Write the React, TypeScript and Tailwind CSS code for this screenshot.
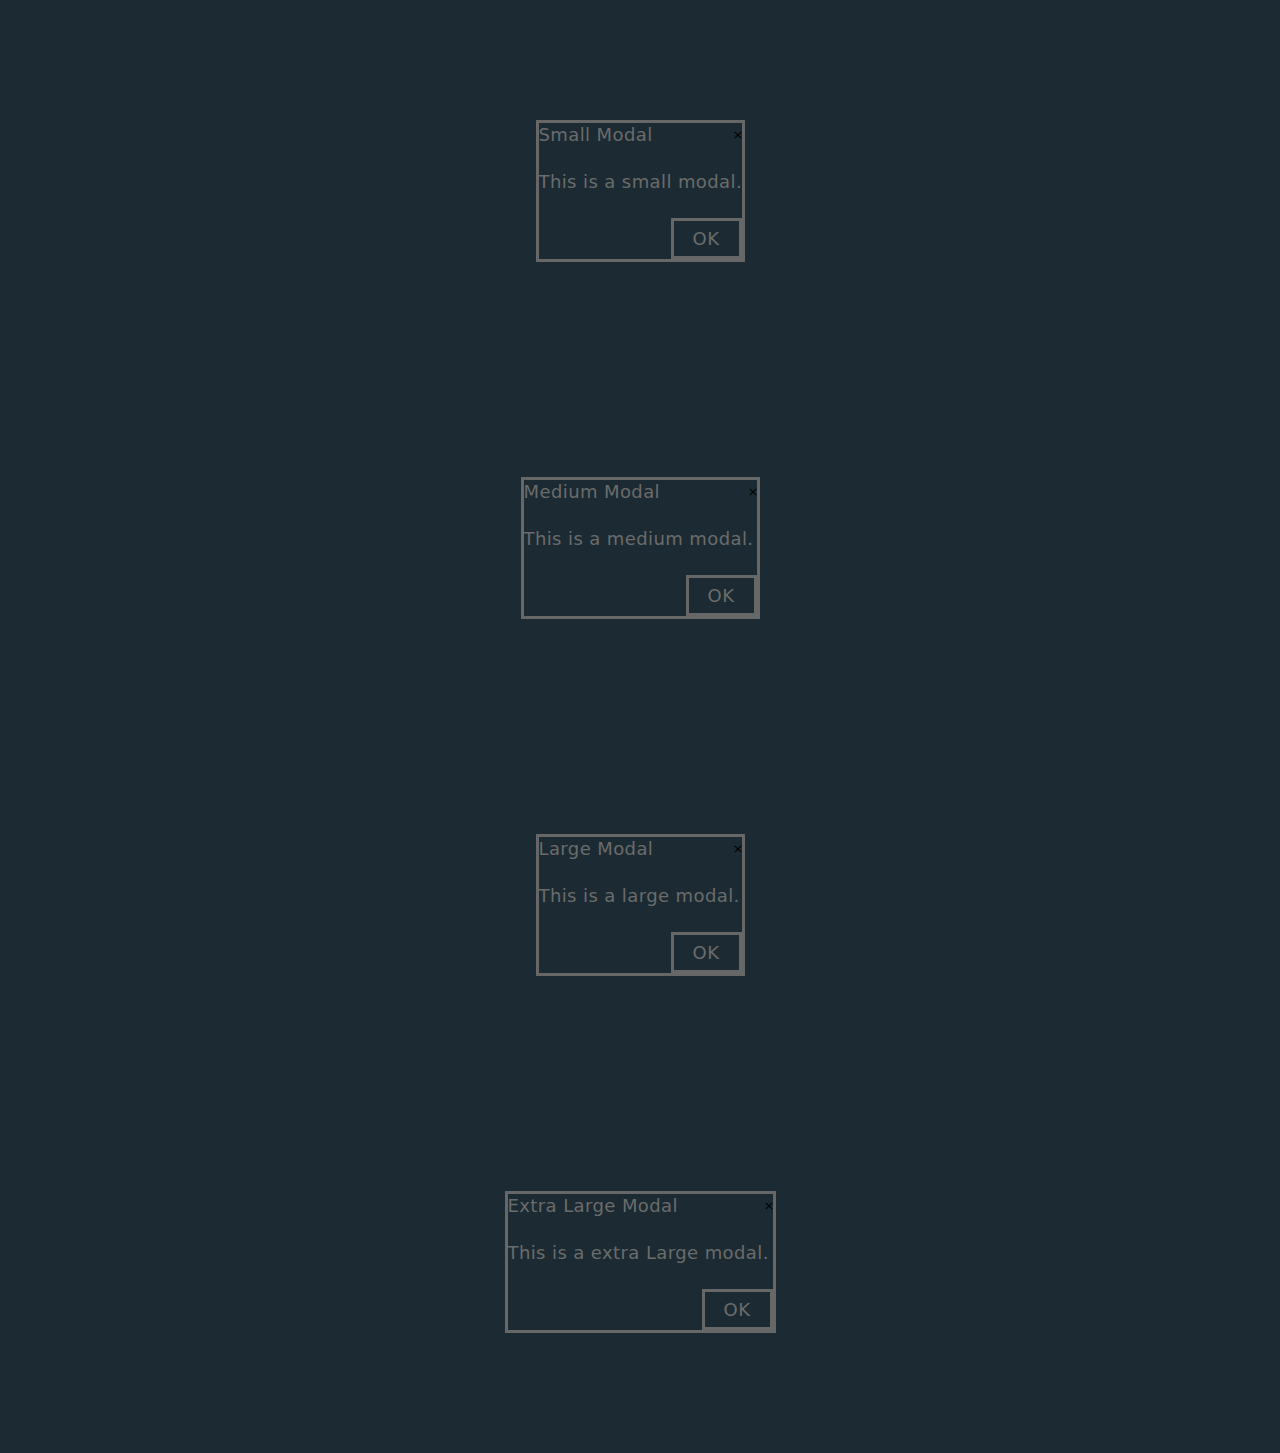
const modals = [
  { title: "Small Modal", body: "This is a small modal.", width: "w-[209px]" },
  { title: "Medium Modal", body: "This is a medium modal.", width: "w-[239px]" },
  { title: "Large Modal", body: "This is a large modal.", width: "w-[209px]" },
  { title: "Extra Large Modal", body: "This is a extra Large modal.", width: "w-[271px]" },
];

function Modal({ title, body, width }: { title: string; body: string; width: string }) {
  return (
    <div className={`${width} border-[3px] border-[#676767] bg-[#1c2b33] flex flex-col`}>
      <div className="flex items-center justify-between h-[23px]">
        <h2 className="text-[18px] leading-[23px] tracking-[0.4px] text-[#6b6b6b] whitespace-nowrap">{title}</h2>
        <button className="text-[13px] leading-none text-black -mr-[2px]">×</button>
      </div>
      <p className="mt-[25px] text-[18px] leading-[22px] tracking-[0.4px] text-[#6b6b6b] whitespace-nowrap">{body}</p>
      <div className="mt-[25px] flex justify-end">
        <button className="w-[71px] h-[41px] border-[3px] border-[#676767] text-[18px] tracking-[0.4px] text-[#6b6b6b] flex items-center justify-center">
          OK
        </button>
      </div>
    </div>
  );
}

export default function App() {
  return (
    <div
      className="min-h-[1453px] bg-[#1c2b33] pt-3 pb-[13px]"
      style={{ fontFamily: '"DejaVu Sans", "Open Sans", sans-serif' }}
    >
      {modals.map((m) => (
        <section key={m.title} className="h-[357px] flex items-center justify-center">
          <Modal {...m} />
        </section>
      ))}
    </div>
  );
}
